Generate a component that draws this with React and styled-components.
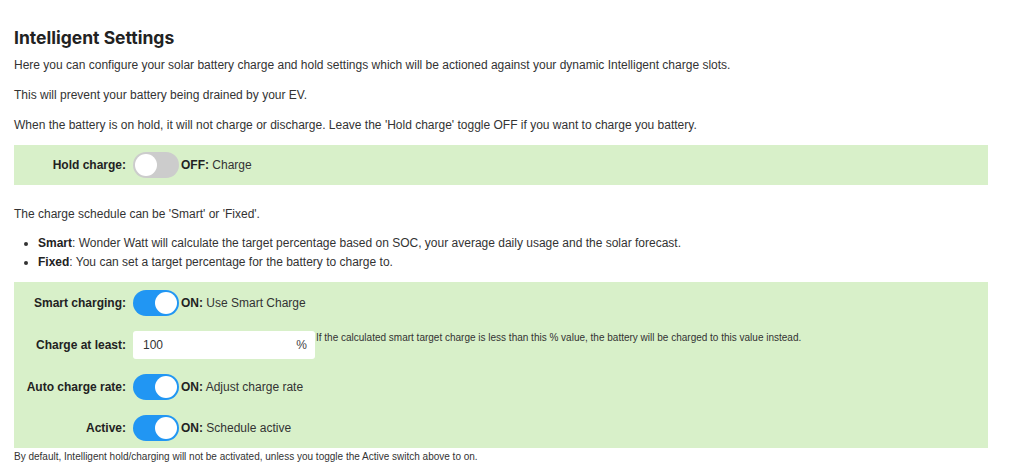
import React from 'react';
import styled, { createGlobalStyle } from 'styled-components';

const GlobalStyle = createGlobalStyle`
  body {
    margin: 0;
    background: #fff;
    font-family: 'Liberation Sans', Arial, sans-serif;
    color: #333;
  }
`;

export default function App() {
  return (
    <>
      <GlobalStyle />
      <Page>
        <Heading>Intelligent Settings</Heading>
        <Text>
          Here you can configure your solar battery charge and hold settings which will be
          actioned against your dynamic Intelligent charge slots.
        </Text>
        <Text>This will prevent your battery being drained by your EV.</Text>
        <Text>
          When the battery is on hold, it will not charge or discharge. Leave the 'Hold charge'
          toggle OFF if you want to charge you battery.
        </Text>

        <Panel>
          <Row>
            <Label>Hold charge:</Label>
            <Toggle on={false} />
            <State>
              <b>OFF:</b> Charge
            </State>
          </Row>
        </Panel>

        <Text $top={19}>The charge schedule can be 'Smart' or 'Fixed'.</Text>
        <List>
          <li>
            <b>Smart</b>: Wonder Watt will calculate the target percentage based on SOC, your
            average daily usage and the solar forecast.
          </li>
          <li>
            <b>Fixed</b>: You can set a target percentage for the battery to charge to.
          </li>
        </List>

        <Panel $tall>
          <Row>
            <Label>Smart charging:</Label>
            <Toggle on />
            <State>
              <b>ON:</b> Use Smart Charge
            </State>
          </Row>
          <Row $top>
            <Label>Charge at least:</Label>
            <InputBox>
              <Input defaultValue="100" />
              <Unit>%</Unit>
            </InputBox>
            <Hint>
              If the calculated smart target charge is less than this % value, the battery will
              be charged to this value instead.
            </Hint>
          </Row>
          <Row>
            <Label>Auto charge rate:</Label>
            <Toggle on />
            <State>
              <b>ON:</b> Adjust charge rate
            </State>
          </Row>
          <Row>
            <Label>Active:</Label>
            <Toggle on />
            <State>
              <b>ON:</b> Schedule active
            </State>
          </Row>
        </Panel>
        <Footnote>
          By default, Intelligent hold/charging will not be activated, unless you toggle the
          Active switch above to on.
        </Footnote>
      </Page>
    </>
  );
}

function Toggle({ on }) {
  return (
    <Switch $on={on}>
      <Knob $on={on} />
    </Switch>
  );
}

const Page = styled.div`
  width: 974px;
  padding: 26px 14px 0 14px;
`;

const Heading = styled.h2`
  font-family: Inter, 'Liberation Sans', sans-serif;
  font-size: 17.5px;
  font-weight: 700;
  color: #222;
  line-height: 24px;
  margin: 0 0 5px 0;
`;

const Text = styled.p`
  font-size: 12px;
  line-height: 20px;
  margin: ${(p) => p.$top || 0}px 0 10px 0;
`;

const List = styled.ul`
  font-size: 12px;
  line-height: 19px;
  margin: 0 0 10px 0;
  padding-left: 24px;

  li b {
    color: #222;
  }
`;

const Panel = styled.div`
  background: #d8f0c9;
  padding: ${(p) => (p.$tall ? '8px 0 7px' : '7px 0')};
  display: flex;
  flex-direction: column;
  gap: 15px;
`;

const Row = styled.div`
  display: flex;
  align-items: ${(p) => (p.$top ? 'flex-start' : 'center')};
  gap: 7px;
`;

const Label = styled.label`
  width: 112px;
  text-align: right;
  font-size: 12px;
  font-weight: 700;
  color: #222;
  align-self: center;
`;

const Switch = styled.span`
  position: relative;
  width: 46px;
  height: 26px;
  border-radius: 13px;
  background: ${(p) => (p.$on ? '#2196f3' : '#cccccc')};
  flex-shrink: 0;
`;

const Knob = styled.span`
  position: absolute;
  top: 2px;
  left: ${(p) => (p.$on ? '22px' : '2px')};
  width: 22px;
  height: 22px;
  border-radius: 50%;
  background: #fff;
`;

const State = styled.span`
  font-size: 12px;
  margin-left: -5px;
  color: #333;

  b {
    color: #222;
  }
`;

const InputBox = styled.div`
  display: flex;
  align-items: center;
  width: 182px;
  height: 28px;
  background: #fff;
  border-radius: 3px;
  padding: 0 8px 0 10px;
  box-sizing: border-box;
`;

const Input = styled.input`
  flex: 1;
  min-width: 0;
  border: none;
  outline: none;
  background: transparent;
  font-family: 'Liberation Sans', Arial, sans-serif;
  font-size: 12px;
  color: #333;
  padding: 0;
`;

const Unit = styled.span`
  font-size: 12px;
  color: #444;
`;

const Hint = styled.span`
  font-size: 10px;
  line-height: 14px;
  margin-left: -6px;
  color: #333;
`;

const Footnote = styled.p`
  font-size: 10px;
  line-height: 18px;
  margin: 0;
`;
